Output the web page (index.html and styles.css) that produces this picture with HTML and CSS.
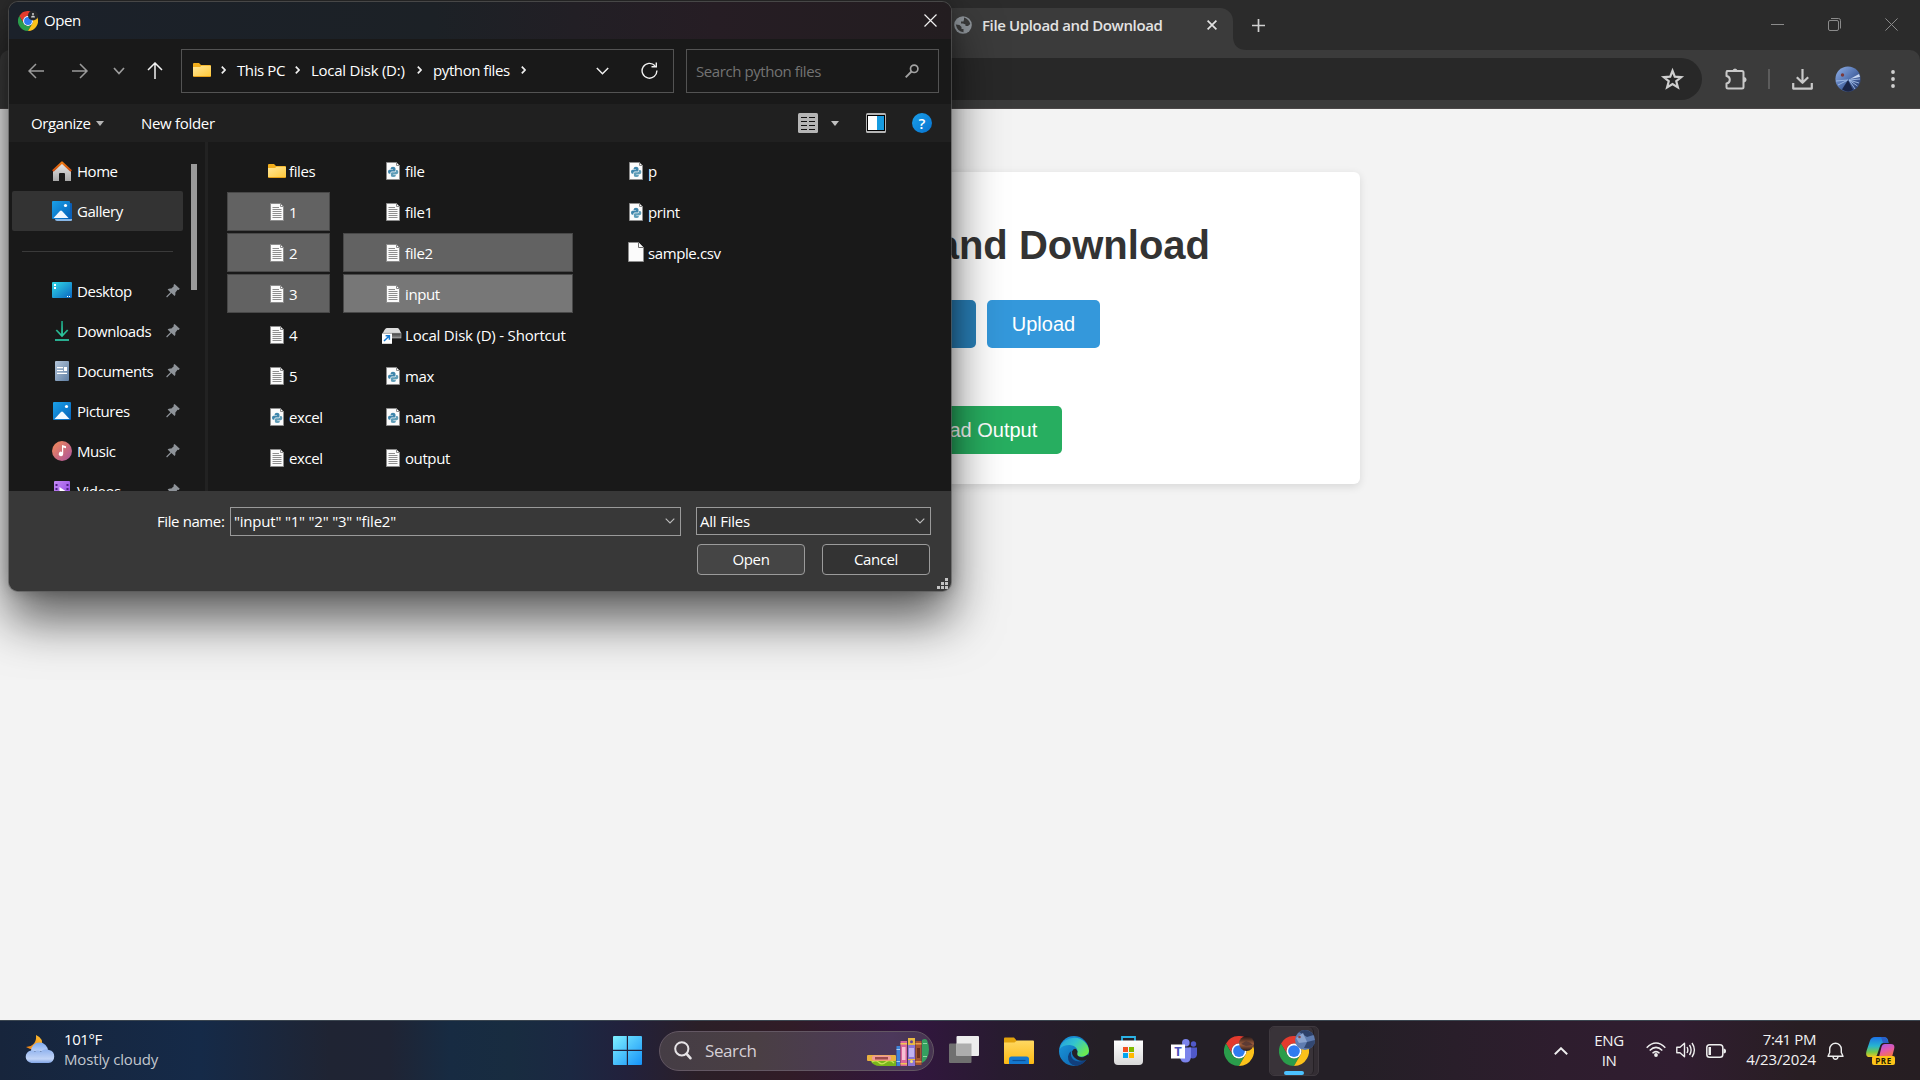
FILE: index.html
```html
<!DOCTYPE html>
<html lang="en">
<head>
<meta charset="utf-8">
<title>File Upload and Download</title>
<link rel="stylesheet" href="styles.css">
</head>
<body>
<svg class="defs" aria-hidden="true">
  <defs>
    <linearGradient id="gFolder" x1="0" y1="0" x2="1" y2="1"><stop offset="0" stop-color="#ffe79a"/><stop offset="1" stop-color="#ffc93b"/></linearGradient>
    <linearGradient id="gBlue" x1="0" y1="0" x2="1" y2="1"><stop offset="0" stop-color="#1ba1e8"/><stop offset="1" stop-color="#0560b8"/></linearGradient>
    <linearGradient id="gDesk" x1="0" y1="0" x2="1" y2="1"><stop offset="0" stop-color="#32dbe9"/><stop offset="1" stop-color="#0a64c0"/></linearGradient>
    <linearGradient id="gDown" x1="0" y1="0" x2="0" y2="1"><stop offset="0" stop-color="#1b8f72"/><stop offset="1" stop-color="#2cc79f"/></linearGradient>
    <linearGradient id="gDoc" x1="0" y1="0" x2="1" y2="1"><stop offset="0" stop-color="#b4c6da"/><stop offset="1" stop-color="#5f7ea3"/></linearGradient>
    <linearGradient id="gMusic" x1="0" y1="0" x2="1" y2="1"><stop offset="0" stop-color="#f58b55"/><stop offset="1" stop-color="#a8529e"/></linearGradient>
    <linearGradient id="gVid" x1="0" y1="0" x2="1" y2="1"><stop offset="0" stop-color="#c58af5"/><stop offset="1" stop-color="#8a3fe0"/></linearGradient>
    <linearGradient id="gRoof" x1="0" y1="0" x2="0" y2="1"><stop offset="0" stop-color="#f07b12"/><stop offset="1" stop-color="#c8480a"/></linearGradient>
    <linearGradient id="gWall" x1="0" y1="0" x2="0" y2="1"><stop offset="0" stop-color="#e9e9e9"/><stop offset="1" stop-color="#a8a8a8"/></linearGradient>
    <linearGradient id="gWin" x1="0" y1="0" x2="1" y2="1"><stop offset="0" stop-color="#7ff0ff"/><stop offset="1" stop-color="#1592f8"/></linearGradient>
    <linearGradient id="gCloud" x1="0" y1="0" x2="0" y2="1"><stop offset="0" stop-color="#8fb2ee"/><stop offset=".7" stop-color="#c3d5f7"/><stop offset="1" stop-color="#7fa4e6"/></linearGradient>
    <linearGradient id="gCloudTop" x1="0" y1="0" x2="0" y2="1"><stop offset="0" stop-color="#7ea9ee"/><stop offset="1" stop-color="#b9d0f8"/></linearGradient>
    <linearGradient id="gMoon" x1="1" y1="0" x2="0" y2="1"><stop offset="0" stop-color="#ffc233"/><stop offset="1" stop-color="#f07f13"/></linearGradient>
    <linearGradient id="gEdgeTop" x1="0" y1="0" x2="1" y2=".6"><stop offset="0" stop-color="#2499e0"/><stop offset=".5" stop-color="#33c4cf"/><stop offset="1" stop-color="#6bea52"/></linearGradient>
    <linearGradient id="gEdgeLow" x1="0" y1="0" x2="1" y2="1"><stop offset="0" stop-color="#1b9de2"/><stop offset="1" stop-color="#0c59a4"/></linearGradient>
    <linearGradient id="gBag" x1="0" y1="0" x2="0" y2="1"><stop offset="0" stop-color="#ffffff"/><stop offset="1" stop-color="#d9d9d9"/></linearGradient>
    <linearGradient id="gExp" x1="0" y1="0" x2="0" y2="1"><stop offset="0" stop-color="#ffd862"/><stop offset="1" stop-color="#fdb913"/></linearGradient>
    <linearGradient id="gCopA" x1="0" y1="0" x2="0" y2="1"><stop offset="0" stop-color="#1d72e8"/><stop offset=".45" stop-color="#27b4d0"/><stop offset=".75" stop-color="#74c94b"/><stop offset="1" stop-color="#f0c81e"/></linearGradient>
    <linearGradient id="gCopB" x1="0" y1="0" x2=".4" y2="1"><stop offset="0" stop-color="#a259ee"/><stop offset=".6" stop-color="#e65aa5"/><stop offset="1" stop-color="#f5734f"/></linearGradient>
    <linearGradient id="gFish" x1="0" y1="0" x2="1" y2="1"><stop offset="0" stop-color="#93b3ea"/><stop offset=".5" stop-color="#5272b0"/><stop offset="1" stop-color="#1f3060"/></linearGradient>
    <linearGradient id="gPhoto" x1="0" y1="0" x2="0" y2="1"><stop offset="0" stop-color="#1d1418"/><stop offset=".55" stop-color="#a5603c"/><stop offset="1" stop-color="#221a1e"/></linearGradient>
    <linearGradient id="gDrive" x1="0" y1="0" x2="0" y2="1"><stop offset="0" stop-color="#3b3b3b"/><stop offset="1" stop-color="#8c8c8c"/></linearGradient>
  </defs>
  <symbol id="chrome" viewBox="0 0 48 48">
    <path fill="#e33b2e" d="M3.2 12A24 24 0 0 1 44.8 12H24A12 12 0 0 0 13.6 30Z"/>
    <path fill="#2a9d4b" d="M3.2 12L13.6 30A12 12 0 0 0 34.4 30L24 48A24 24 0 0 1 3.2 12Z"/>
    <path fill="#fcc21b" d="M44.8 12H24A12 12 0 0 1 34.4 30L24 48A24 24 0 0 0 44.8 12Z"/>
    <circle cx="24" cy="24" r="12" fill="#fff"/><circle cx="24" cy="24" r="9.4" fill="#2f7bf0"/>
  </symbol>
  <symbol id="folder" viewBox="0 0 18 14">
    <path fill="#f2ae1c" d="M0 1Q0 0 1 0H6L8 2H17Q18 2 18 3V8H0Z"/>
    <path fill="url(#gFolder)" d="M0 4H7L8.5 2.8H17.2Q18 2.8 18 3.6V13H0Z"/><path fill="#e59f18" d="M0 13H18V13.2Q18 14 17 14H1Q0 14 0 13.2Z"/>
  </symbol>
  <symbol id="txt" viewBox="0 0 14 18">
    <path fill="#fbfbfb" stroke="#8d8d8d" d="M.5.5H10.5L13.5 3.5V17.5H.5Z"/><path fill="none" stroke="#8d8d8d" d="M10.5.5V3.5H13.5"/>
    <path stroke="#8f8f8f" d="M2.5 4.5H9M2.5 6.5H11.5M2.5 8.5H11.5M2.5 10.5H11.5M2.5 12.5H11.5M2.5 14.5H11.5"/>
  </symbol>
  <symbol id="py" viewBox="0 0 14 18">
    <path fill="#fbfbfb" stroke="#8d8d8d" d="M.5.5H10.5L13.5 3.5V17.5H.5Z"/><path fill="none" stroke="#8d8d8d" d="M10.5.5V3.5H13.5"/>
    <path fill="#3f86ac" d="M4.6 6.4Q4.6 4.8 7 4.8T9.5 6.4V8.4Q9.5 9.6 8.2 9.6H5.8Q4.3 9.6 4.3 11.8H3.4Q2 11.8 2 9.7T3.6 7.7H7V7.2H4.6Z"/>
    <path fill="#5f9db8" d="M9.8 13.4Q9.8 15 7.3 15T4.9 13.4V11.6Q4.9 10.3 6.1 10.3H8.6Q10.2 10.3 10.2 8H11Q12.3 8 12.3 10.1T10.8 12.2H7.3V12.7H9.8Z"/>
  </symbol>
  <symbol id="blank" viewBox="0 0 16 20"><path fill="#fbfbfb" stroke="#8d8d8d" d="M.5.5H10.5L15.5 5.5V19.5H.5Z"/><path fill="#fbfbfb" stroke="#6d6d6d" d="M10.5.5V5.5H15.5"/></symbol>
  <symbol id="shortcut" viewBox="0 0 20 16">
    <path fill="#dcdcdc" d="M5 0H15.5Q17 0 19 5H1Q3 0 5 0Z"/><rect x="1" y="5" width="18" height="5" fill="url(#gDrive)" stroke="#b9b9b9" stroke-width=".6"/>
    <rect y="5.5" width="10" height="10.3" fill="#fff"/><path fill="none" stroke="#1478d0" stroke-width="1.5" d="M2 13L7.2 8M3.6 7.8H7.4V11.8"/>
  </symbol>
  <symbol id="pin" viewBox="0 0 14 14"><path fill="#8e9399" d="M8.6 0L13.8 4.8L12.6 6L11.6 5.8L9.4 8.4Q9.7 10.6 8.6 12L5.4 9L1 13.4L.2 12.6L4.4 8.2L1.6 5.6Q3 4.2 5.4 4.6L7.8 2.2L7.5 1.1Z"/></symbol>
  <symbol id="picture" viewBox="0 0 18 18"><rect width="18" height="18" rx="1" fill="url(#gBlue)"/><path fill="#f2f8ff" d="M1.5 17L8 10Q9 9 10 10L16.5 17Z"/><circle cx="13.5" cy="4.5" r="1.6" fill="#fff"/></symbol>
  <symbol id="chev" viewBox="0 0 10 6"><path fill="none" stroke="currentColor" stroke-width="1.1" d="M.7.7L5 5L9.3.7"/></symbol>
</svg>

<div class="screen">
  <main class="browser">
    <header class="tabstrip">
      <div class="tab">
        <svg class="globe" viewBox="0 0 18 18"><circle cx="9" cy="9" r="8.8" fill="#8f959b"/><path fill="#3b3b3b" d="M10 1.5Q15 3 16.3 8L14 10H11.5V8.5L9 7.5H7V5.5H9.5L10 3.6ZM1.8 8.5L5.5 9L7.5 11V13H9.5V16.2Q3.3 15.7 1.8 8.5Z"/></svg>
        <span class="tab-title">File Upload and Download</span>
        <svg class="tab-close" viewBox="0 0 10 10"><path stroke="#e3e3e3" stroke-width="1.7" d="M.6.6L9.4 9.4M9.4.6L.6 9.4"/></svg>
      </div>
      <svg class="tab-curve" viewBox="0 0 14 42"><path fill="#3b3b3b" d="M0 28Q0 42 14 42H0Z"/></svg>
      <svg class="plus" viewBox="0 0 13 13"><path stroke="#d0d0d0" stroke-width="1.7" d="M6.5 0V13M0 6.5H13"/></svg>
      <div class="win-controls">
        <svg viewBox="0 0 13 13"><path stroke="#8b8b8b" d="M0 6.5H13"/></svg>
        <svg viewBox="0 0 13 13"><path fill="none" stroke="#8b8b8b" d="M.5 4Q.5 2.5 2 2.5H9Q10.5 2.5 10.5 4V11Q10.5 12.5 9 12.5H2Q.5 12.5.5 11ZM3 .5H10.5Q12.5.5 12.5 2.5V10.5"/></svg>
        <svg viewBox="0 0 13 13"><path stroke="#8b8b8b" d="M.4.4L12.6 12.6M12.6.4L.4 12.6"/></svg>
      </div>
    </header>
    <div class="toolbar">
      <div class="omnibox"><svg class="star" viewBox="0 0 24 24"><path fill="none" stroke="#cfcfcf" stroke-width="2.1" d="M12 3.6L14.2 9.3L20.4 9.7L15.6 13.6L17.2 19.6L12 16.3L6.8 19.6L8.4 13.6L3.6 9.7L9.8 9.3Z"/></svg></div>
      <svg class="puzzle" viewBox="0 0 22 22"><path fill="none" stroke="#c9c9c9" stroke-width="2" stroke-linejoin="round" d="M2 3H17Q18.500 3 18.500 4.500V19Q18.500 20.500 17 20.500H3Q1.500 20.500 1.500 19V15.500Q4.800 15 4.800 11.800T1.500 8V4.500Q1.500 3 3 3Z"/><path fill="#c9c9c9" d="M7.400 3Q7.800.4 10 .4T12.700 3ZM19 9Q21.600 9.400 21.600 11.700T19 14.400Z"/></svg>
      <i class="sep"></i>
      <svg class="dl" viewBox="0 0 21 21"><path fill="none" stroke="#c9c9c9" stroke-width="2.200" stroke-linejoin="round" d="M10.500 0V12.500M4.800 8.200L10.500 13.800L16.200 8.200M1.200 14V19.600H19.800V14"/></svg>
      <svg class="avatar" viewBox="0 0 26 26"><circle cx="13" cy="13" r="12.600" fill="url(#gFish)"/><path fill="none" stroke="#a3bde8" stroke-width=".9" d="M14 14L25 13M14 14L24 17M14 14L22.500 20M14 14L20 23M13 14L3 19M13 14L1 15"/><path fill="#1a2547" d="M13 14L18 24Q13 27 7 23.500Z"/><path fill="#c5d6f2" d="M15 13L24 8L25 11Z"/><circle cx="7.500" cy="9" r="1.700" fill="#7c3a3c"/></svg>
      <svg class="dots" viewBox="0 0 4 18"><g fill="#d0d0d0"><circle cx="2" cy="2" r="1.900"/><circle cx="2" cy="9" r="1.900"/><circle cx="2" cy="16" r="1.900"/></g></svg>
    </div>
    <section class="page">
      <div class="card">
        <h1>File Upload and Download</h1>
        <div class="actions"><div class="btn choose"></div><div class="btn upload">Upload</div></div>
        <div class="btn output">Download Output</div>
      </div>
    </section>
  </main>

  <section class="dialog">
    <header class="titlebar">
      <svg class="app" viewBox="0 0 21 21"><use href="#chrome" width="20" height="20" y="1"/><circle cx="15" cy="5.500" r="5" fill="#26282b"/><path fill="#cfcfcf" d="M13 7.500Q13 5.500 15 5.500T17 7.500ZM14 4A1 1 0 0 1 16 4A1 1 0 0 1 14 4Z"/></svg>
      <span class="t open-title">Open</span>
      <svg class="x" viewBox="0 0 13 13"><path stroke="#f0f0f0" stroke-width="1.200" d="M.5.5L12.500 12.500M12.500.5L.5 12.500"/></svg>
    </header>
    <div class="nav">
      <svg class="arrow back" viewBox="0 0 17 16"><path fill="none" stroke="#9b9b9b" stroke-width="1.500" d="M16 8H1M8 1L1 8L8 15"/></svg>
      <svg class="arrow fwd" viewBox="0 0 17 16"><path fill="none" stroke="#9b9b9b" stroke-width="1.500" d="M0 8H15M8 1L15 8L8 15"/></svg>
      <svg class="recent" viewBox="0 0 12 8"><path fill="none" stroke="#9b9b9b" stroke-width="1.700" d="M1 1L6 6.500L11 1"/></svg>
      <svg class="up" viewBox="0 0 16 17"><path fill="none" stroke="#f2f2f2" stroke-width="1.500" d="M8 17V1M1 8L8 1L15 8"/></svg>
      <div class="address">
        <svg class="folder"><use href="#folder"/></svg>
        <svg class="gt" viewBox="0 0 5 8"><path d="M.8.6L4 4L.8 7.400"/></svg><span class="t c1">This PC</span>
        <svg class="gt" viewBox="0 0 5 8"><path d="M.8.6L4 4L.8 7.400"/></svg><span class="t c2">Local Disk (D:)</span>
        <svg class="gt" viewBox="0 0 5 8"><path d="M.8.6L4 4L.8 7.400"/></svg><span class="t c3">python files</span>
        <svg class="gt" viewBox="0 0 5 8"><path d="M.8.6L4 4L.8 7.400"/></svg>
        <svg class="drop" viewBox="0 0 13 8"><path fill="none" stroke="#f0f0f0" stroke-width="1.500" d="M.8 1L6.500 6.700L12.200 1"/></svg>
        <svg class="refresh" viewBox="0 0 17 17"><path fill="none" stroke="#f0f0f0" stroke-width="1.400" d="M14 3.800A7.400 7.400 0 1 0 15.900 8.500M15.300.5V4.700H10.500"/></svg>
      </div>
      <div class="search"><span class="t">Search python files</span><svg viewBox="0 0 14 14"><circle cx="9.200" cy="4.800" r="3.700" fill="none" stroke="#a2a2a2" stroke-width="1.700"/><path stroke="#a2a2a2" stroke-width="1.900" d="M6.500 7.500L.7 13.300"/></svg></div>
    </div>
    <div class="commands">
      <span class="t organize">Organize</span><svg class="tri o" viewBox="0 0 8 5"><path fill="#b5b5b5" d="M0 0H8L4 5Z"/></svg>
      <span class="t newf">New folder</span>
      <svg class="view" viewBox="0 0 20 20"><rect width="20" height="20" rx="1.500" fill="#b5b5b5"/><path stroke="#111" d="M3 4.500H9M11 4.500H17M3 8.500H9M11 8.500H17M3 12.500H9M11 12.500H17M3 16.500H9M11 16.500H17"/></svg>
      <svg class="tri v" viewBox="0 0 8 5"><path fill="#c0c0c0" d="M0 0H8L4 5Z"/></svg>
      <svg class="preview" viewBox="0 0 20 20"><rect width="20" height="20" rx="1.500" fill="#b5b5b5"/><rect x="1.500" y="2.500" width="17" height="15" fill="#fff" stroke="#000"/><rect x="11" y="3" width="7" height="14" fill="#169be0"/></svg>
      <span class="help">?</span>
    </div>
    <div class="content">
      <nav class="side">
        <div class="srow"><svg viewBox="0 0 20 20"><path fill="url(#gWall)" d="M1 9L10 2L19 9V20H13V13Q13 12 12 12H8Q7 12 7 13V20H1Z"/><path fill="none" stroke="url(#gRoof)" stroke-width="2.300" stroke-linejoin="round" d="M.8 10L10 1.500L19.200 10"/></svg><span class="t">Home</span></div>
        <div class="srow sel"><svg viewBox="0 0 20 20"><path fill="#0a5fb8" d="M18 2H19Q20 2 20 3V18H18Z"/><path fill="#87b6e6" d="M3 18H20V19Q20 20 19 20H5Q3 20 3 18Z"/><use href="#picture" width="18" height="18"/></svg><span class="t">Gallery</span></div>
        <div class="srow"><i></i></div>
        <div class="srow"><svg viewBox="0 0 20 20"><rect y="1" width="20" height="16" rx="1" fill="url(#gDesk)"/><path fill="#fff" d="M2 3H4V5H2ZM2 6H4V8H2ZM15 15H16V16H15ZM17 15H18V16H17Z"/></svg><span class="t">Desktop</span><svg class="pin"><use href="#pin"/></svg></div>
        <div class="srow"><svg viewBox="0 0 20 20"><path fill="none" stroke="url(#gDown)" stroke-width="1.800" d="M10 0V14.500M10.100 0V14.500M4.300 9L10 15L15.700 9"/><path stroke="#2cc0a0" stroke-width="1.800" d="M3 19H17"/></svg><span class="t">Downloads</span><svg class="pin"><use href="#pin"/></svg></div>
        <div class="srow"><svg viewBox="0 0 20 20"><rect x="3" width="14" height="20" rx="1" fill="url(#gDoc)"/><path stroke="#fff" stroke-width="1.200" d="M5 6.700H11M5 9.500H11M5 12.300H15"/><rect x="12" y="6" width="3" height="4" fill="#fff"/></svg><span class="t">Documents</span><svg class="pin"><use href="#pin"/></svg></div>
        <div class="srow"><svg viewBox="0 0 20 20"><use href="#picture" x="1" y="1" width="18" height="18"/></svg><span class="t">Pictures</span><svg class="pin"><use href="#pin"/></svg></div>
        <div class="srow"><svg viewBox="0 0 20 20"><circle cx="10" cy="10" r="10" fill="url(#gMusic)"/><path fill="#fff" d="M10 4L14 5.200V7.200L11.200 6.500V12.800A2.200 2.200 0 1 1 10 11Z"/></svg><span class="t">Music</span><svg class="pin"><use href="#pin"/></svg></div>
        <div class="srow"><svg viewBox="0 0 20 20"><rect x="2" width="16" height="20" rx="1" fill="url(#gVid)"/><path fill="#4b1f80" d="M3.500 3H5.500V5H3.500ZM3.500 7H5.500V9H3.500ZM14.500 3H16.500V5H14.500ZM14.500 7H16.500V9H14.500Z"/><path fill="#fff" d="M7.500 6L13.500 10L7.500 14Z"/></svg><span class="t">Videos</span><svg class="pin"><use href="#pin"/></svg></div>
      </nav>
      <div class="sbar"><i></i></div>
      <div class="files">
        <div class="col a">
          <div class="file"><svg class="fo"><use href="#folder"/></svg><span class="t">files</span></div>
          <div class="file on"><svg><use href="#txt"/></svg><span class="t">1</span></div>
          <div class="file on"><svg><use href="#txt"/></svg><span class="t">2</span></div>
          <div class="file on"><svg><use href="#txt"/></svg><span class="t">3</span></div>
          <div class="file"><svg><use href="#txt"/></svg><span class="t">4</span></div>
          <div class="file"><svg><use href="#txt"/></svg><span class="t">5</span></div>
          <div class="file"><svg><use href="#py"/></svg><span class="t">excel</span></div>
          <div class="file"><svg><use href="#txt"/></svg><span class="t">excel</span></div>
        </div>
        <div class="col b">
          <div class="file"><svg><use href="#py"/></svg><span class="t">file</span></div>
          <div class="file"><svg><use href="#txt"/></svg><span class="t">file1</span></div>
          <div class="file on"><svg><use href="#txt"/></svg><span class="t">file2</span></div>
          <div class="file on focus"><svg><use href="#txt"/></svg><span class="t">input</span></div>
          <div class="file"><svg class="sc"><use href="#shortcut"/></svg><span class="t long">Local Disk (D) - Shortcut</span></div>
          <div class="file"><svg><use href="#py"/></svg><span class="t">max</span></div>
          <div class="file"><svg><use href="#py"/></svg><span class="t">nam</span></div>
          <div class="file"><svg><use href="#txt"/></svg><span class="t">output</span></div>
        </div>
        <div class="col c">
          <div class="file"><svg><use href="#py"/></svg><span class="t">p</span></div>
          <div class="file"><svg><use href="#py"/></svg><span class="t">print</span></div>
          <div class="file"><svg class="bl"><use href="#blank"/></svg><span class="t">sample.csv</span></div>
        </div>
      </div>
    </div>
    <footer class="foot">
      <div class="frow"><span class="t label">File name:</span><div class="field name"><span class="t long">"input" "1" "2" "3" "file2"</span><svg><use href="#chev"/></svg></div><div class="field type"><span class="t long">All Files</span><svg><use href="#chev"/></svg></div></div>
      <div class="brow"><div class="dbtn primary"><span class="t">Open</span></div><div class="dbtn"><span class="t">Cancel</span></div></div>
      <svg class="grip" viewBox="0 0 11 11"><path fill="#c4c4c4" d="M8 0H11V3H8ZM4 4H7V7H4ZM8 4H11V7H8ZM0 8H3V11H0ZM4 8H7V11H4ZM8 8H11V11H8Z"/></svg>
    </footer>
  </section>

  <footer class="taskbar">
    <div class="weather">
      <svg viewBox="0 0 30 30"><path fill="url(#gMoon)" d="M11 1Q20 5 16 13Q11 19 1 13Q12 12 11 1Z"/><path fill="url(#gCloudTop)" d="M6 17A8.500 8.500 0 0 1 23 17Z"/><path fill="url(#gCloud)" d="M6.500 29A6.300 6.300 0 0 1 6 16.500Q8 16 10 17.500Q12 15.500 16 17.500A7 7 0 0 1 24 16A6.600 6.600 0 0 1 23.500 29Z"/></svg>
      <div class="wtext"><span class="t w1">101°F</span><span class="t w2">Mostly cloudy</span></div>
    </div>
    <div class="apps">
      <svg class="start" viewBox="0 0 29 29"><path fill="url(#gWin)" d="M1 0H13.800V13.800H0V1Q0 0 1 0ZM15 0H28Q29 0 29 1V13.800H15ZM0 15H13.800V29H1Q0 29 0 28ZM15 15H29V28Q29 29 28 29H15Z"/></svg>
      <div class="tsearch">
        <svg class="mag" viewBox="0 0 18 19"><circle cx="7.800" cy="7.800" r="6.600" fill="none" stroke="#e6e3e6" stroke-width="2"/><path stroke="#e6e3e6" stroke-width="2.600" stroke-linecap="round" d="M12.600 12.800L16.400 17.200"/></svg>
        <span class="t">Search</span>
        <svg class="books" viewBox="0 0 62 29">
          <path fill="#79b51c" d="M3 22H29V28H13Q6 28 3 22Z"/><path fill="none" stroke="#c7e254" stroke-width="1.300" d="M5 24Q9 21.500 12 24.500T19 24T27 25"/>
          <rect y="17" width="29" height="6" rx="1" fill="#e9b13f"/><rect x="5" y="17.500" width="19" height="5" rx="2" fill="#f19b97"/><rect x="8" y="19" width="13" height="2.500" fill="#9d4a4c"/>
          <rect x="29.500" y="8" width="3.500" height="20" fill="#3f83d8"/><path fill="#a9cdf5" d="M29.500 11H33V12H29.500ZM29.500 23H33V24H29.500Z"/>
          <rect x="33.500" y="3" width="6.500" height="25" fill="#d8659b"/><path fill="#f8c0d4" d="M35 9H38.500V22H35Z"/><path fill="#f3c552" d="M33.500 5H40V6.500H33.500ZM33.500 25H40V26.500H33.500Z"/>
          <rect x="41" y="0" width="7" height="28" fill="#8d76d5"/><path fill="#e9b943" d="M41 0H48V7H41ZM41 21H48V22H41Z"/><circle cx="44.500" cy="3.800" r="1.500" fill="#62449d"/><path fill="#c1b2f2" d="M42 10H47V19H42Z"/><circle cx="44.500" cy="23.500" r="1.500" fill="#f6df7e"/>
          <rect x="48.500" y="3" width="6" height="24" fill="#a85432"/><path fill="#e8a04a" d="M48.500 5H54.500V6.500H48.500ZM48.500 23H54.500V24.500H48.500Z"/><path fill="#6e2f1c" d="M50 10H53V20H50Z"/>
          <path fill="#35a060" d="M55 2Q58 0 60 2Q64 12 60 20Q58 24 55 25Z"/><path fill="#8fd6a4" d="M56 5H60V6H56ZM56 18H60V19H56Z"/>
        </svg>
      </div>
      <svg class="tview" viewBox="0 0 30 27"><rect y="7.500" width="22.500" height="19.500" rx="1" fill="#707070"/><rect x="7.500" width="22.500" height="20" rx="1" fill="#ededed"/><path fill="#adadad" d="M7.500 7.500H22.500V20H7.500Z"/></svg>
      <svg class="explorer" viewBox="0 0 30 27"><path fill="#e2a20c" d="M0 1.500Q0 .5 1 .5H10L13 4H22V10H0Z"/><path fill="url(#gExp)" d="M0 5.500H10.500L13 3.500H29Q30 3.500 30 4.500V26Q30 27 29 27H1Q0 27 0 26Z"/><path fill="#1478cf" d="M5 27V22Q5 19.500 7.500 19.500H22.500Q25 19.500 25 22V27Z"/><path stroke="#0b4f96" stroke-width="1.200" d="M8.500 23.500H21.500"/></svg>
      <svg class="edge" viewBox="0 0 30 30"><circle cx="15" cy="15" r="15" fill="url(#gEdgeLow)"/><path fill="url(#gEdgeTop)" d="M.6 13A15 15 0 0 1 30 14.500C30 18.500 26.500 20.700 22.500 20.700C18.500 20.700 17 19 18.200 17C19.500 14 17 9.600 11 9Q4 8.800.6 13Z"/><path fill="#123f7c" d="M12.300 15C10.500 21.500 15 25.500 20.500 25.500Q24.500 25.500 27.500 23.200Q24 29 17 30Q8.500 28 9 20.500Q9.500 16.500 12.300 15Z"/><path fill="#252027" d="M18.500 15.200Q18 18 18.600 19.400Q20 21.500 24 21.300L29 18.500L30 21L27.600 23.500Q23 26 18 23.500Q12.500 20 13 15.500Q14.500 12 17 13Z"/></svg>
      <svg class="store" viewBox="0 0 29 29"><path fill="none" stroke="#2bb3e6" stroke-width="1.800" d="M8 6V1H21V6"/><path fill="url(#gBag)" d="M0 4.500H29V25Q29 29 25 29H4Q0 29 0 25Z"/><path fill="#f25022" d="M9 11H14V16H9Z"/><path fill="#7fba00" d="M15 11H20V16H15Z"/><path fill="#00a4ef" d="M9 17H14V22H9Z"/><path fill="#ffb900" d="M15 17H20V22H15Z"/></svg>
      <div class="teams"><svg viewBox="0 0 27 24"><circle cx="22.500" cy="5" r="2.700" fill="#5059c9"/><circle cx="14.800" cy="3.800" r="3.800" fill="#7b83eb"/><path fill="#5059c9" d="M18 8.500H26V15.500Q25.500 19.500 21.500 19.500Q18 19 18 16Z"/><path fill="#7b83eb" d="M9 8.500H20V18Q19.500 23.600 14.500 23.600T9 18Z"/><rect y="5.500" width="14" height="14" fill="#fff"/></svg><b>T</b></div>
      <svg class="chr" viewBox="0 0 30 30"><use href="#chrome" width="30" height="30"/><circle cx="22.500" cy="7.500" r="7.500" fill="url(#gPhoto)"/><path fill="#5d3b33" d="M17 8L22 5L26 6.500L29 9L22 10Z"/></svg>
      <div class="active"><div class="pill"><svg viewBox="0 0 36 36"><use href="#chrome" y="6" width="30" height="30"/><circle cx="26" cy="10" r="10" fill="#5f7cb0"/><path fill="#2d4069" d="M20 2A10 10 0 0 1 34.500 5L28 7Z"/><path fill="#8ba4cf" d="M17 8L24 3L28 12L20 13Z"/><path fill="#334872" d="M28 12L36 10Q36 16 31 18.600L25 18Z"/><circle cx="20.500" cy="7" r="1.300" fill="#8a4744"/></svg><i></i></div></div>
    </div>
    <div class="tray">
      <svg class="tup" viewBox="0 0 14 8"><path fill="none" stroke="#eee" stroke-width="1.900" d="M.8 7.200L7 1.200L13.200 7.200"/></svg>
      <div class="lang"><span class="t">ENG</span><span class="t">IN</span></div>
      <svg class="wifi" viewBox="0 0 20 15"><g fill="none" stroke="#eee" stroke-width="1.500"><path d="M.7 5.700Q10-3.700 19.300 5.700"/><path d="M3.700 8.500Q10 2.300 16.300 8.500"/><path d="M6.500 11.300Q10 8 13.500 11.300"/></g><circle cx="10" cy="13" r="1.900" fill="#eee"/></svg>
      <svg class="vol" viewBox="0 0 20 16"><g fill="none" stroke="#eee" stroke-width="1.400"><path stroke-linejoin="round" d="M.8 5.300H4L8.500 1.300V14.700L4 10.700H.8Z"/><path d="M11 5Q12.700 8 11 11M13.500 3Q16.700 8 13.500 13M16 1Q20.800 8 16 15"/></g></svg>
      <svg class="bat" viewBox="0 0 20 14"><rect x=".8" y=".8" width="16" height="12.400" rx="2.800" fill="none" stroke="#eee" stroke-width="1.500"/><rect x="2.500" y="3" width="2.500" height="8" fill="#eee"/><path fill="#eee" d="M17.500 4.500Q20 4.500 20 7T17.500 9.500Z"/></svg>
      <div class="clock"><span class="t k1">7:41 PM</span><span class="t k2">4/23/2024</span></div>
      <svg class="bell" viewBox="0 0 17 18"><path fill="none" stroke="#eee" stroke-width="1.400" stroke-linejoin="round" d="M1 14.300L2.700 10.500V7A5.800 5.800 0 0 1 14.300 7V10.500L16 14.300ZM6 14.800Q6.500 17.200 8.500 17.200T11 14.800"/></svg>
      <div class="copilot"><svg viewBox="0 0 29 28"><path fill="url(#gCopA)" d="M9 0H18Q21 0 22 3L22.500 6H17Q15 6 14.200 8.500L11 18Q10.500 20 8 20H3.500Q-1 20 .5 14L4 3.500Q5.200 0 9 0Z"/><path fill="url(#gCopB)" d="M19 7H25Q29.500 7 28 12.500L26 20H13L15.500 10Q16.300 7 19 7Z"/><path fill="#2a60c8" d="M15 0H18Q21 0 22.500 6H17Q16 3 15 0Z"/></svg><b>PRE</b></div>
    </div>
  </footer>
</div>
</body>
</html>
```
FILE: styles.css
```css
* { box-sizing: border-box; }
body { margin: 0; overflow: hidden; background: #f3f3f3; font-family: "Open Sans", "Noto Sans", sans-serif; }
svg { display: block; flex: none; }
.defs { position: absolute; width: 0; height: 0; }
.screen { position: relative; width: 1920px; height: 1080px; display: flex; flex-direction: column; overflow: hidden; }
.t { font-size: 15px; line-height: 20px; letter-spacing: -.4px; white-space: nowrap; color: #fff; }
.t.long { letter-spacing: -.2px; }

/* browser */
.browser { flex: 1; display: flex; flex-direction: column; min-height: 0; background: #2b2b2b; }
.tabstrip { height: 50px; display: flex; padding-top: 8px; flex: none; }
.tab { width: 1223px; margin-left: 10px; background: #3b3b3b; border-radius: 0 13px 0 0; display: flex; align-items: center; padding: 0 0 8px 944px; }
.globe { width: 18px; height: 18px; }
.tab-title { margin-left: 10px; width: 182px; font-size: 15px; line-height: 20px; font-weight: 600; letter-spacing: -.37px; color: #e3e3e3; white-space: nowrap; }
.tab-close { width: 10px; height: 10px; margin-left: 43px; }
.tab-curve { width: 14px; height: 42px; }
.plus { width: 13px; height: 13px; margin: 11px 0 0 5px; }
.win-controls { margin-left: auto; display: flex; gap: 44px; padding: 10px 22px 0 0; }
.win-controls svg { width: 13px; height: 13px; }
.toolbar { height: 59px; flex: none; background: #3b3b3b; border-bottom: 1px solid #4b4748; border-radius: 10px 10px 0 0; display: flex; align-items: center; }
.omnibox { width: 1602px; height: 42px; margin-left: 100px; background: #282828; border-radius: 21px; display: flex; align-items: center; justify-content: flex-end; padding-right: 17px; }
.star { width: 25px; height: 25px; }
.puzzle { width: 22px; height: 22px; margin-left: 23px; }
.sep { width: 2px; height: 20px; margin-left: 21px; background: #5c5c5c; }
.dl { width: 21px; height: 21px; margin-left: 22px; }
.avatar { width: 26px; height: 26px; margin-left: 22px; }
.dots { width: 4px; height: 18px; margin-left: 30px; }
.page { flex: 1; background: #f3f3f3; padding-top: 63px; }
.card { width: 800px; height: 312px; margin: 0 auto; background: #fff; border-radius: 6px; box-shadow: 0 2.5px 8px rgba(0,0,0,.11); display: flex; flex-direction: column; align-items: center; }
.card h1 { margin: 50px 0 0; font: bold 40px/46px "Liberation Sans", Arial, sans-serif; color: #333; white-space: nowrap; }
.actions { display: flex; gap: 11px; margin-top: 32px; }
.btn { height: 48px; border-radius: 5px; font: 20px/48px "Liberation Sans", Arial, sans-serif; color: #fff; text-align: center; white-space: nowrap; }
.choose { width: 156px; background: #2980b9; }
.upload { width: 113px; background: #3498db; }
.output { width: 204px; background: #27ae60; margin-top: 58px; }

/* file dialog */
.dialog { position: absolute; left: 8px; top: 1px; width: 944px; height: 591px; border: 1px solid rgba(90,90,90,.65); border-radius: 10px; background: #191919 padding-box; display: flex; flex-direction: column; overflow: hidden; box-shadow: 0 28px 50px rgba(0,0,0,.62), 0 0 14px rgba(0,0,0,.2); }
.titlebar { height: 37px; flex: none; display: flex; align-items: center; background: linear-gradient(90deg, #1b212a, #1c2126 45%, #221f25 60%, #261d24 75%, #231d20); padding: 0 14px 1px 9px; }
.app { width: 21px; height: 21px; }
.open-title { margin: 0 0 1px 5px; }
.x { width: 13px; height: 13px; margin-left: auto; }
.nav { height: 65px; flex: none; display: flex; align-items: center; padding: 0 0 2px 19px; }
.arrow { width: 17px; height: 16px; }
.fwd { margin-left: 27px; }
.recent { width: 12px; height: 8px; margin-left: 24px; }
.up { width: 16px; height: 17px; margin-left: 22px; }
.address { width: 493px; height: 44px; margin-left: 18px; border: 1px solid #535353; display: flex; align-items: center; padding: 0 15px 0 11px; }
.address .folder { width: 18px; height: 14px; margin-bottom: 2px; }
.gt { width: 5px; height: 8px; margin: 0 0 1px; fill: none; stroke: #eee; stroke-width: 1.7; }
.folder + .gt { margin-left: 10px; }
.address .t { margin: 0 11px 1px 11px; }
.c1 { width: 47px; } .c2 { width: 95px; letter-spacing: -.25px; } .c3 { width: 77px; }
.drop { width: 13px; height: 8px; margin-left: auto; }
.refresh { width: 17px; height: 17px; margin-left: 32px; }
.search { width: 253px; height: 44px; margin-left: 12px; border: 1px solid #535353; display: flex; align-items: center; justify-content: space-between; padding: 0 19px 0 9px; }
.search .t { color: #737373; letter-spacing: -.42px; }
.search svg { width: 14px; height: 14px; }
.commands { height: 38px; flex: none; background: #202020; display: flex; align-items: center; padding-left: 22px; }
.organize { width: 60px; }
.tri { width: 8px; height: 5px; }
.tri.o { margin-left: 5px; }
.newf { margin-left: 37px; letter-spacing: -.3px; }
.view { width: 20px; height: 20px; margin-left: auto; }
.tri.v { margin-left: 13px; }
.preview { width: 20px; height: 20px; margin-left: 27px; }
.help { width: 20px; height: 20px; margin: 0 19px 0 26px; border-radius: 50%; background: linear-gradient(135deg, #1ba0ea, #0672cf); color: #fff; font: 600 15px/20px "Open Sans", sans-serif; text-align: center; }
.content { height: 349px; flex: none; display: flex; overflow: hidden; }
.side { width: 171px; margin-left: 3px; padding-top: 9px; }
.srow { height: 40px; display: flex; align-items: center; padding-left: 40px; }
.srow > svg { width: 20px; height: 20px; }
.srow .t { width: 89px; margin-left: 5px; letter-spacing: -.45px; }
.srow svg.pin { width: 14px; height: 14px; }
.srow i { width: 151px; height: 1px; background: #3a3a3a; margin-left: -30px; }
.srow.sel { background: #333; border-radius: 2px; }
.sbar { width: 25px; border-right: 3px solid #222; padding: 22px 0 0 8px; }
.sbar i { display: block; width: 6px; height: 126px; background: #9a9a9a; }
.files { display: flex; padding-top: 9px; margin-left: 19px; }
.col { display: flex; flex-direction: column; gap: 2px; }
.a { width: 103px; } .b { width: 230px; margin-left: 13px; } .c { margin-left: 13px; }
.file { height: 39px; display: flex; align-items: center; padding-left: 43px; }
.file svg { width: 14px; height: 18px; }
.file .t { margin-left: 5px; }
.file svg.fo { width: 18px; height: 14px; margin: 0 -2px; }
.file svg.sc { width: 20px; height: 16px; margin: 3px -2px 0 -4px; }
.file svg.bl { width: 16px; height: 20px; margin: -2px -1px 0 -1px; }
.file.on { background: #626262; box-shadow: inset 0 0 0 1px #484848; }
.file.focus { background: #777; }
.foot { position: relative; height: 100px; flex: none; background: #383838; padding-top: 16px; }
.frow { display: flex; align-items: flex-start; padding-left: 148px; }
.label { width: 68px; margin: 4px 5px 0 0; }
.field { height: 29px; border: 1px solid #9a9a9a; background: #333; display: flex; align-items: center; justify-content: space-between; padding: 0 5px 1px 3px; }
.field svg { width: 10px; height: 6px; color: #bdbdbd; }
.name { width: 451px; background: #383838; }
.type { width: 235px; height: 28px; margin-left: 15px; padding-bottom: 0; }
.brow { display: flex; gap: 17px; padding: 8px 0 0 688px; }
.dbtn { width: 108px; height: 31px; border: 1px solid #9b9b9b; border-radius: 4px; background: #333; text-align: center; line-height: 28px; }
.primary { background: #454545; }
.grip { position: absolute; right: 3px; bottom: 2px; width: 11px; height: 11px; }

/* taskbar */
.taskbar { height: 60px; flex: none; display: flex; align-items: center; border-top: 1px solid #3b4650; background: linear-gradient(90deg, #17253c 0, #152a48 200px, #1f2433 330px, #1f2434 390px, #172b42 450px, #182c40 510px, #1b2842 570px, #22213c 625px, #2b1f27 700px, #311c27 790px, #32163f 910px, #281b30 1000px, #241f26 1100px, #241f26 1350px, #2e1d2e 1560px, #301d30 1680px, #281e23 1800px, #261e22 1920px); }
.weather { width: 613px; display: flex; align-items: center; padding-left: 25px; }
.weather svg { width: 30px; height: 30px; margin-top: -4px; }
.wtext { display: flex; flex-direction: column; margin: -3px 0 1px 9px; }
.w2 { color: #c2c7cf; letter-spacing: -.15px; }
.apps { display: flex; align-items: center; }
.start { width: 29px; height: 29px; }
.tsearch { width: 275px; height: 40px; margin-left: 17px; border: 1px solid #635763; border-radius: 20px; background: linear-gradient(90deg, #453d45, #4a3f44 35%, #4c385b 85%, #473451); display: flex; align-items: center; padding-left: 14px; }
.mag { width: 18px; height: 19px; }
.tsearch .t { width: 52px; margin-left: 13px; font-size: 17px; color: #d6d0d6; }
.books { width: 62px; height: 29px; margin-left: 110px; margin-top: 4px; }
.tview { width: 30px; height: 27px; margin-left: 15px; margin-top: -2px; }
.explorer { width: 30px; height: 27px; margin-left: 25px; }
.edge { width: 30px; height: 30px; margin-left: 25px; }
.store { width: 29px; height: 29px; margin-left: 25px; }
.teams { width: 27px; height: 24px; margin-left: 28px; display: grid; }
.teams svg, .teams b { grid-area: 1 / 1; }
.teams svg { width: 27px; height: 24px; }
.teams b { width: 14px; margin-top: 5px; font: bold 13px/15px "Open Sans", sans-serif; color: #4b53bc; text-align: center; }
.chr { width: 30px; height: 30px; margin-left: 26px; }
.active { width: 50px; height: 50px; margin-left: 15px; background: #332d33; border: 1px solid #3f393f; border-radius: 5px; }
.pill { width: 44px; height: 48px; background: #393339; border-right: 1px solid #252025; border-radius: 5px; display: flex; flex-direction: column; padding: 3px 0 0 9px; }
.pill svg { width: 36px; height: 36px; }
.pill i { width: 20px; height: 4px; margin: 5px 0 0 5px; border-radius: 2px; background: #4cc2ff; }
.tray { margin-left: auto; display: flex; align-items: center; padding-right: 25px; }
.tray .t { color: #f2f2f2; }
.tup { width: 14px; height: 8px; }
.lang { width: 30px; margin: -1px 22px 0 26px; display: flex; flex-direction: column; align-items: center; }
.wifi { width: 20px; height: 15px; margin-top: -3px; }
.vol { width: 20px; height: 16px; margin: -1px 0 0 10px; }
.bat { width: 20px; height: 14px; margin-left: 10px; }
.clock { width: 76px; margin: -3px 11px 1px 14px; display: flex; flex-direction: column; align-items: flex-end; }
.k2 { letter-spacing: -.15px; }
.bell { width: 17px; height: 18px; }
.copilot { width: 29px; height: 28px; margin: 1px 0 0 22px; display: grid; }
.copilot svg, .copilot b { grid-area: 1 / 1; }
.copilot svg { width: 29px; height: 28px; }
.copilot b { align-self: end; margin-left: 6px; width: 23px; height: 9px; border-radius: 2px; background: #fcc419; color: #221c00; font: bold 8px/9px "Open Sans", sans-serif; letter-spacing: .5px; text-align: center; }
```
